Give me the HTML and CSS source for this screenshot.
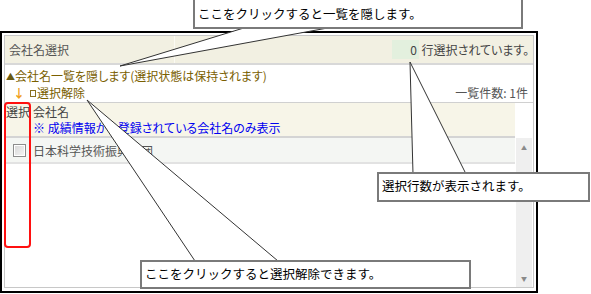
FILE: index.html
```html
<!DOCTYPE html>
<html lang="ja">
<head>
    <meta charset="UTF-8">
    <title>会社名選択</title>
    <link rel="stylesheet" href="styles.css">
</head>
<body>
    <div class="page">
        <div class="frame">
            <div class="panel">
                <div class="panel-head">
                    <div class="head-title">会社名選択</div>
                    <div class="head-count"><span class="count-num">0</span> 行選択されています。</div>
                </div>
                <div class="toggle-line"><span class="tri">▲</span>会社名一覧を隠します(選択状態は保持されます)</div>
                <div class="tools-line">
                    <div class="clear-sel"><span class="down-arrow">↓</span><span class="mini-box"></span>選択解除</div>
                    <div class="list-total">一覧件数: <span class="total-num">1</span>件</div>
                </div>
                <div class="list">
                    <div class="list-body">
                        <div class="list-head">
                            <div class="col-sel">選択</div>
                            <div class="col-name">
                                <div>会社名</div>
                                <div class="note">※ 成績情報から登録されている会社名のみ表示</div>
                            </div>
                        </div>
                        <div class="list-row">
                            <div class="col-sel"><span class="check"></span></div>
                            <div class="col-name">日本科学技術振興財団</div>
                        </div>
                    </div>
                    <div class="scroll-col">
                        <div class="scroll-top"></div>
                        <div class="scroll-bar">
                            <span class="scroll-up">▲</span>
                            <span class="scroll-down">▼</span>
                        </div>
                    </div>
                </div>
            </div>
        </div>

        <!-- annotations -->
        <div class="sel-mark"></div>
        <svg class="pointers" width="591" height="294" viewBox="0 0 591 294" xmlns="http://www.w3.org/2000/svg">
            <polygon points="120,66 247,27 333,27" />
            <polygon points="410,62 413,174 466,174" />
            <polygon points="87,100 195,261 278,261" />
        </svg>
        <div class="callout callout-hide">ここをクリックすると一覧を隠します。</div>
        <div class="callout callout-count">選択行数が表示されます。</div>
        <div class="callout callout-clear">ここをクリックすると選択解除できます。</div>
    </div>
</body>
</html>
```

FILE: styles.css
```css
body {
    margin: 0;
    background-color: #fff;
    font-family: "Noto Sans CJK JP", "DejaVu Sans", sans-serif;
    font-size: 12px;
    font-feature-settings: "palt";
    color: #444;
}
.page {
    position: relative;
    width: 591px;
    height: 294px;
    overflow: hidden;
}
.frame {
    box-sizing: border-box;
    margin-top: 31px;
    width: 538px;
    height: 262px;
    border: 2px solid #000;
    padding: 2px 2px 3px 2px;
}
.panel {
    box-sizing: border-box;
    height: 100%;
    border: 1px solid #c8c8c8;
    display: flex;
    flex-direction: column;
}
.panel-head {
    display: flex;
    height: 27px;
    background-color: #f2f0e2;
    border-bottom: 2px solid #d8d8d8;
    line-height: 27px;
}
.head-title {
    width: 165px;
    padding-left: 4px;
    border-right: 1px solid #fbfaf3;
    color: #555;
}
.head-count {
    flex: 1;
    text-align: right;
    padding-right: 4px;
    color: #444;
}
.count-num {
    display: inline-block;
    width: 25px;
    padding-right: 2px;
    text-align: right;
    background-color: #e3f0de;
    line-height: 19px;
}
.toggle-line {
    margin-top: 3px;
    padding-left: 1px;
    line-height: 15px;
    color: #7a6000;
}
.tri {
    font-size: 9px;
    vertical-align: 1px;
    color: #6a5a10;
}
.tools-line {
    display: flex;
    justify-content: space-between;
    line-height: 16px;
    padding: 1px 5px 1px 0;
}
.clear-sel {
    color: #7a6000;
    display: flex;
    align-items: center;
}
.down-arrow {
    width: 12px;
    margin-left: 8px;
    color: #f0a020;
    font-weight: bold;
    font-size: 12px;
}
.mini-box {
    width: 4px;
    height: 5px;
    border: 1px solid #8a7020;
    margin: 0 1px 0 5px;
}
.list-total {
    color: #555;
}
.list {
    flex: 1;
    display: flex;
    border-top: 1px solid #d0d0d0;
}
.list-body {
    flex: 1;
}
.list-head {
    display: flex;
    height: 33px;
    background-color: #f7f5e8;
    border-bottom: 2px solid #d4d4d4;
    line-height: 16px;
}
.col-sel {
    width: 27px;
    padding-left: 1px;
    flex-shrink: 0;
}
.col-name {
    flex: 1;
}
.list-head .col-sel,
.list-head .col-name {
    padding-top: 1px;
}
.note {
    color: #0000f0;
}
.list-row {
    display: flex;
    height: 24px;
    align-items: center;
    background-color: #f4f6f3;
    border-bottom: 2px solid #e2e2e2;
    color: #555;
}
.check {
    display: block;
    box-sizing: border-box;
    width: 13px;
    height: 13px;
    margin-left: 7px;
    border: 1px solid #8c8c8c;
    background: linear-gradient(135deg, #d6d6d6, #f6f6f6);
    box-shadow: inset 0 0 0 1px #fff;
}
.scroll-col {
    width: 18px;
    display: flex;
    flex-direction: column;
}
.scroll-top {
    height: 35px;
    background-color: #fff;
}
.scroll-bar {
    flex: 1;
    margin: 0 1px;
    background-color: #efefef;
    display: flex;
    flex-direction: column;
    justify-content: space-between;
    align-items: center;
    font-size: 6px;
    color: #8a8a8a;
    padding: 5px 0 4px;
}
.sel-mark {
    position: absolute;
    left: 4px;
    top: 102px;
    width: 23px;
    height: 142px;
    border: 2px solid #ff1010;
    border-radius: 4px;
}
.pointers {
    position: absolute;
    left: 0;
    top: 0;
}
.pointers polygon {
    fill: #fff;
    stroke: #333;
    stroke-width: 1;
}
.callout {
    position: absolute;
    box-sizing: border-box;
    background-color: #fff;
    border: 2px solid #7a7a7a;
    color: #000;
    font-size: 12.5px;
    font-feature-settings: normal;
    line-height: 24px;
    padding-left: 3px;
    white-space: nowrap;
}
.callout-hide {
    left: 193px;
    top: -2px;
    width: 330px;
    height: 31px;
    padding-top: 2px;
}
.callout-count {
    left: 377px;
    top: 172px;
    width: 213px;
    height: 30px;
}
.callout-clear {
    left: 140px;
    top: 260px;
    width: 331px;
    height: 29px;
}
```
